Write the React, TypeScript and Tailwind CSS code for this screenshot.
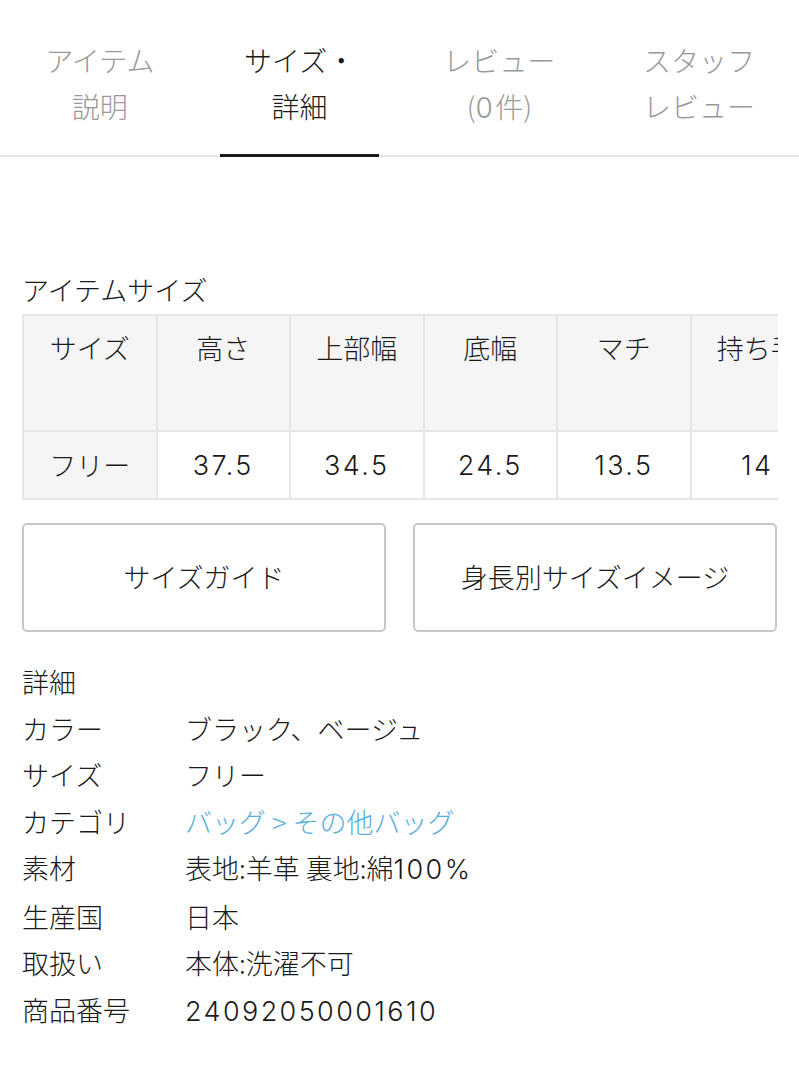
import React from "react";

const tabs = [
  { lines: ["アイテム", "説明"], active: false },
  { lines: ["サイズ・", "詳細"], active: true },
  { lines: ["レビュー", "(0件)"], active: false },
  { lines: ["スタッフ", "レビュー"], active: false },
];

const headers = ["サイズ", "高さ", "上部幅", "底幅", "マチ", "持ち手"];
const values = ["フリー", "37.5", "34.5", "24.5", "13.5", "14"];

const details: { label: string; value: string; link?: boolean }[] = [
  { label: "カラー", value: "ブラック、ベージュ" },
  { label: "サイズ", value: "フリー" },
  { label: "カテゴリ", value: "バッグ > その他バッグ", link: true },
  { label: "素材", value: "表地:羊革 裏地:綿100%" },
  { label: "生産国", value: "日本" },
  { label: "取扱い", value: "本体:洗濯不可" },
  { label: "商品番号", value: "24092050001610" },
];

// digits in the reference font are wide, so give them their own face
function Txt({ text }: { text: string }) {
  const parts = text.split(/([0-9.%]+)/);
  return (
    <>
      {parts.map((p, i) =>
        /^[0-9.%]+$/.test(p) ? (
          <span
            key={i}
            className="tracking-[2.4px] font-light"
            style={{ fontFamily: 'Inter, "Noto Sans", sans-serif' }}
          >
            {p}
          </span>
        ) : (
          <span key={i}>{p}</span>
        )
      )}
    </>
  );
}

export default function App() {
  return (
    <div
      className="w-[799px] min-h-[1080px] bg-white text-[#1a1a1a] font-light"
      style={{ fontFamily: '"Noto Sans CJK JP", "Noto Sans", sans-serif' }}
    >
      {/* tabs */}
      <div className="flex border-b-2 border-[#e6e6e6]">
        {tabs.map((t) => (
          <div
            key={t.lines[0]}
            className={`relative flex-1 pt-[37px] pb-[24px] text-center text-[28px] leading-[46px] ${
              t.active ? "text-[#1a1a1a]" : "text-[#999999]"
            }`}
          >
            {t.lines.map((l) => (
              <div key={l}>
                <Txt text={l} />
              </div>
            ))}
            {t.active && (
              <div className="absolute left-[20px] right-[21px] bottom-[-2px] h-[3px] bg-[#1a1a1a]" />
            )}
          </div>
        ))}
      </div>

      <div className="px-[22px]">
        <div className="mt-[115px] text-[27px] leading-[36px]">アイテムサイズ</div>

        <div className="mt-[6px] w-[756px] overflow-hidden">
          <table className="table-fixed border-collapse w-[801px] text-[27px]">
            <tbody>
              <tr className="bg-[#f5f5f5]">
                {headers.map((h) => (
                  <td
                    key={h}
                    className="h-[116px] w-[133.5px] border-2 border-[#e6e6e6] pt-[14px] align-top text-center leading-[36px] whitespace-nowrap overflow-hidden"
                  >
                    {h}
                  </td>
                ))}
              </tr>
              <tr>
                {values.map((v, i) => (
                  <td
                    key={i}
                    className={`h-[68px] border-2 border-[#e6e6e6] text-center align-middle leading-[36px] ${
                      i === 0 ? "bg-[#f5f5f5]" : "bg-white"
                    }`}
                  >
                    <Txt text={v} />
                  </td>
                ))}
              </tr>
            </tbody>
          </table>
        </div>

        <div className="mt-[23px] grid grid-cols-2 gap-[27px]">
          <button className="h-[109px] rounded-[5px] border-2 border-[#c8c8c8] bg-white text-[27px] text-[#1a1a1a]">
            サイズガイド
          </button>
          <button className="h-[109px] rounded-[5px] border-2 border-[#c8c8c8] bg-white text-[27px] text-[#1a1a1a]">
            身長別サイズイメージ
          </button>
        </div>

        <div className="mt-[27px] text-[27px] leading-[46.5px]">
          <div>詳細</div>
          {details.map((d) => (
            <div key={d.label} className="flex">
              <div className="w-[163px] shrink-0">{d.label}</div>
              <div className={d.link ? "text-[#5aaedc]" : ""}>
                <Txt text={d.value} />
              </div>
            </div>
          ))}
        </div>
      </div>
    </div>
  );
}
